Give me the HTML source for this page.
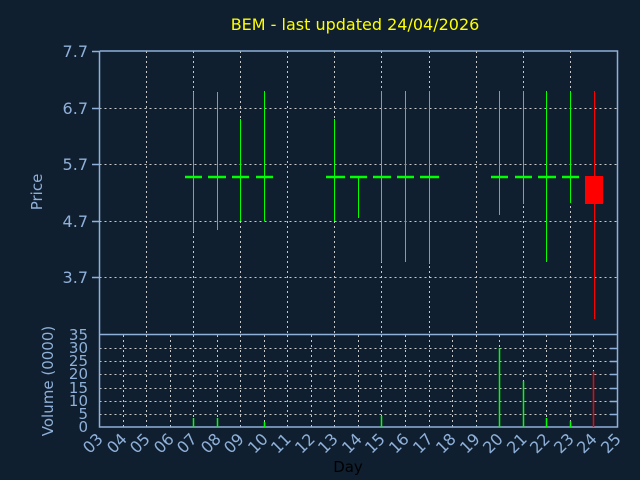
<!DOCTYPE html>
<html><head><meta charset="utf-8"><style>
html,body{margin:0;padding:0;background:#0f1f30;}
svg{display:block;font-family:"DejaVu Sans","Liberation Sans",sans-serif;}
</style></head><body>
<svg width="640" height="480" viewBox="0 0 640 480" xmlns="http://www.w3.org/2000/svg">
<rect width="640" height="480" fill="#0f1f30"/>
<text x="355" y="30" fill="#ffff00" font-size="16" text-anchor="middle">BEM - last updated 24/04/2026</text>
<g id="grid" stroke="#c8c8c8" stroke-width="1" stroke-dasharray="2,3" fill="none">
<path d="M99.5 108.5H617M99.5 164.5H617M99.5 221.5H617M99.5 277.5H617"/>
<path d="M146.5 51V334M193.5 51V334M240.5 51V334M287.5 51V334M334.5 51V334M381.5 51V334M429.5 51V334M476.5 51V334M523.5 51V334M570.5 51V334"/>
<path d="M99.5 348.5H617M99.5 361.5H617M99.5 374.5H617M99.5 388.5H617M99.5 401.5H617M99.5 414.5H617"/>
<path d="M123.5 335V427M146.5 335V427M170.5 335V427M193.5 335V427M217.5 335V427M240.5 335V427M264.5 335V427M287.5 335V427M311.5 335V427M334.5 335V427M358.5 335V427M381.5 335V427M405.5 335V427M429.5 335V427M452.5 335V427M476.5 335V427M499.5 335V427M523.5 335V427M546.5 335V427M570.5 335V427M593.5 335V427"/>
</g>
<g stroke="#8fb0d8" stroke-width="1.5" fill="none">
<path d="M99.5 51V427H617.5V51H99.5"/>
<path d="M99.5 334.5H617.5"/>
<path d="M92 51.5H99M92 108.5H99M92 164.5H99M92 221.5H99M92 277.5H99"/>
<path d="M610 348.5H617M610 361.5H617M610 374.5H617M610 388.5H617M610 401.5H617M610 414.5H617"/>
</g>
<g fill="#8fb0d8" font-size="16" text-anchor="end">
<text x="88" y="57">7.7</text><text x="88" y="114">6.7</text><text x="88" y="170">5.7</text><text x="88" y="227">4.7</text><text x="88" y="283">3.7</text>
</g>
<g fill="#8fb0d8" font-size="15" text-anchor="end">
<text x="88" y="340">35</text><text x="88" y="353">30</text><text x="88" y="366">25</text><text x="88" y="379">20</text><text x="88" y="393">15</text><text x="88" y="406">10</text><text x="88" y="419">5</text><text x="88" y="432">0</text>
</g>
<text transform="translate(42,192) rotate(-90)" fill="#8fb0d8" font-size="15" text-anchor="middle">Price</text>
<text transform="translate(53,381) rotate(-90)" fill="#8fb0d8" font-size="15" text-anchor="middle">Volume (0000)</text>
<g fill="#8fb0d8" font-size="16" text-anchor="end">
<text transform="translate(104,440) rotate(-45)">03</text>
<text transform="translate(128,440) rotate(-45)">04</text>
<text transform="translate(151,440) rotate(-45)">05</text>
<text transform="translate(175,440) rotate(-45)">06</text>
<text transform="translate(198,440) rotate(-45)">07</text>
<text transform="translate(222,440) rotate(-45)">08</text>
<text transform="translate(245,440) rotate(-45)">09</text>
<text transform="translate(269,440) rotate(-45)">10</text>
<text transform="translate(292,440) rotate(-45)">11</text>
<text transform="translate(316,440) rotate(-45)">12</text>
<text transform="translate(339,440) rotate(-45)">13</text>
<text transform="translate(363,440) rotate(-45)">14</text>
<text transform="translate(386,440) rotate(-45)">15</text>
<text transform="translate(410,440) rotate(-45)">16</text>
<text transform="translate(434,440) rotate(-45)">17</text>
<text transform="translate(457,440) rotate(-45)">18</text>
<text transform="translate(481,440) rotate(-45)">19</text>
<text transform="translate(504,440) rotate(-45)">20</text>
<text transform="translate(528,440) rotate(-45)">21</text>
<text transform="translate(551,440) rotate(-45)">22</text>
<text transform="translate(575,440) rotate(-45)">23</text>
<text transform="translate(598,440) rotate(-45)">24</text>
<text transform="translate(622,440) rotate(-45)">25</text>
</g>
<text x="348" y="472" fill="#000" font-size="15" text-anchor="middle">Day</text>
<g stroke="#00ff00" stroke-width="1" fill="none">
<path d="M193.5 92V232M217.5 92V230M240.5 119V221M264.5 91V221M334.5 119V221M358.5 177V218M381.5 91V262M405.5 91V262M429.5 91V264M499.5 91V215M523.5 91V204M546.5 91V262M570.5 91V203"/>
</g>
<g stroke="#00ff00" stroke-width="2.5" fill="none">
<path d="M185 177H202M208 177H226M232 177H249M256 177H273M326 177H345M350 177H367M373 177H391M397 177H414M420 177H439M491 177H508M515 177H532M538 177H556M562 177H579"/>
</g>
<path d="M594.5 91V319" stroke="#ff0000" stroke-width="1"/>
<rect x="585" y="176" width="18" height="28" fill="#ff0000"/>
<g stroke="#00ff00" stroke-width="1.5">
<path d="M193.5 418V427M217.5 418V427M264.5 422V427M381.5 416V427M499.5 348V427M523.5 381V427M546.5 418V427M570.5 421V427"/>
</g>
<path d="M593.5 371V427" stroke="#ff0000" stroke-width="1.5"/>
</svg>
</body></html>
